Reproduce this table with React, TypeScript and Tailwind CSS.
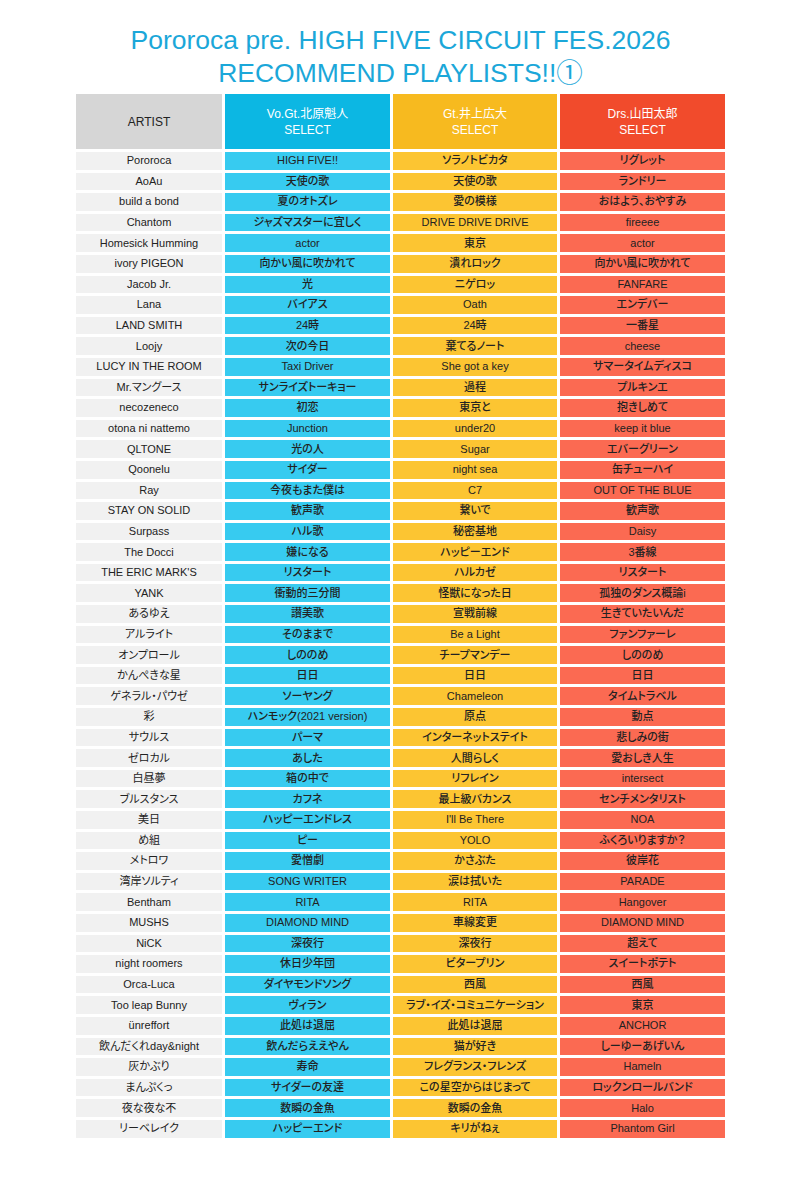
const rows: [string, string, string, string][] = [
  ['Pororoca', 'HIGH FIVE!!', 'ソラノトビカタ', 'リグレット'],
  ['AoAu', '天使の歌', '天使の歌', 'ランドリー'],
  ['build a bond', '夏のオトズレ', '愛の模様', 'おはよう、おやすみ'],
  ['Chantom', 'ジャズマスターに宜しく', 'DRIVE DRIVE DRIVE', 'fireeee'],
  ['Homesick Humming', 'actor', '東京', 'actor'],
  ['ivory PIGEON', '向かい風に吹かれて', '潰れロック', '向かい風に吹かれて'],
  ['Jacob Jr.', '光', 'ニゲロッ', 'FANFARE'],
  ['Lana', 'バイアス', 'Oath', 'エンデバー'],
  ['LAND SMITH', '24時', '24時', '一番星'],
  ['Loojy', '次の今日', '棄てるノート', 'cheese'],
  ['LUCY IN THE ROOM', 'Taxi Driver', 'She got a key', 'サマータイムディスコ'],
  ['Mr.マングース', 'サンライズトーキョー', '過程', 'プルキンエ'],
  ['necozeneco', '初恋', '東京と', '抱きしめて'],
  ['otona ni nattemo', 'Junction', 'under20', 'keep it blue'],
  ['QLTONE', '光の人', 'Sugar', 'エバーグリーン'],
  ['Qoonelu', 'サイダー', 'night sea', '缶チューハイ'],
  ['Ray', '今夜もまた僕は', 'C7', 'OUT OF THE BLUE'],
  ['STAY ON SOLID', '歓声歌', '繋いで', '歓声歌'],
  ['Surpass', 'ハル歌', '秘密基地', 'Daisy'],
  ['The Docci', '嫌になる', 'ハッピーエンド', '3番線'],
  ["THE ERIC MARK'S", 'リスタート', 'ハルカゼ', 'リスタート'],
  ['YANK', '衝動的三分間', '怪獣になった日', '孤独のダンス概論i'],
  ['あるゆえ', '讃美歌', '宣戦前線', '生きていたいんだ'],
  ['アルライト', 'そのままで', 'Be a Light', 'ファンファーレ'],
  ['オンプロール', 'しののめ', 'チープマンデー', 'しののめ'],
  ['かんぺきな星', '日日', '日日', '日日'],
  ['ゲネラル・パウゼ', 'ソーヤング', 'Chameleon', 'タイムトラベル'],
  ['彩', 'ハンモック(2021 version)', '原点', '動点'],
  ['サウルス', 'パーマ', 'インターネットステイト', '悲しみの街'],
  ['ゼロカル', 'あした', '人間らしく', '愛おしき人生'],
  ['白昼夢', '箱の中で', 'リフレイン', 'intersect'],
  ['ブルスタンス', 'カフネ', '最上級バカンス', 'センチメンタリスト'],
  ['美日', 'ハッピーエンドレス', "I'll Be There", 'NOA'],
  ['め組', 'ピー', 'YOLO', 'ふくろいりますか？'],
  ['メトロワ', '愛憎劇', 'かさぶた', '彼岸花'],
  ['湾岸ソルティ', 'SONG WRITER', '涙は拭いた', 'PARADE'],
  ['Bentham', 'RITA', 'RITA', 'Hangover'],
  ['MUSHS', 'DIAMOND MIND', '車線変更', 'DIAMOND MIND'],
  ['NiCK', '深夜行', '深夜行', '超えて'],
  ['night roomers', '休日少年団', 'ビタープリン', 'スイートポテト'],
  ['Orca-Luca', 'ダイヤモンドソング', '西風', '西風'],
  ['Too leap Bunny', 'ヴィラン', 'ラブ・イズ・コミュニケーション', '東京'],
  ['ünreffort', '此処は退屈', '此処は退屈', 'ANCHOR'],
  ['飲んだくれday&night', '飲んだらええやん', '猫が好き', 'しーゆーあげいん'],
  ['灰かぶり', '寿命', 'フレグランス・フレンズ', 'Hameln'],
  ['まんぷくっ', 'サイダーの友達', 'この星空からはじまって', 'ロックンロールバンド'],
  ['夜な夜な不', '数瞬の金魚', '数瞬の金魚', 'Halo'],
  ['リーベレイク', 'ハッピーエンド', 'キリがねぇ', 'Phantom Girl'],
];

// palt narrows kana the way the original's proportional Japanese font does
const cell =
  "h-[17.6px] flex items-center justify-center text-[11px] leading-none text-[#222] whitespace-nowrap [font-feature-settings:'palt']";
const head = 'h-[55px] flex flex-col items-center justify-center text-[12px] leading-[16px] text-white';

export default function App() {
  return (
    <div className="w-[801px] min-h-[1200px] bg-white pt-[24px] font-['Liberation_Sans','Noto_Sans_CJK_JP',sans-serif]">
      <h1 className="text-center text-[26.5px] leading-[33px] text-[#1ba7d9] font-normal">
        Pororoca pre. HIGH FIVE CIRCUIT FES.2026
        <br />
        RECOMMEND PLAYLISTS!!①
      </h1>

      <div className="w-[649px] mx-auto mt-[4px] grid grid-cols-[146px_165px_164px_165px] gap-x-[3px] gap-y-[3px]">
        <div className="h-[55px] flex items-center justify-center bg-[#d6d6d6] text-[12px] text-[#222]">ARTIST</div>
        <div className={`${head} bg-[#0cb7e3]`}>
          <span>Vo.Gt.北原魁人</span>
          <span>SELECT</span>
        </div>
        <div className={`${head} bg-[#f7ba1f]`}>
          <span>Gt.井上広大</span>
          <span>SELECT</span>
        </div>
        <div className={`${head} bg-[#f14b2c]`}>
          <span>Drs.山田太郎</span>
          <span>SELECT</span>
        </div>

        {rows.map(([artist, vo, gt, drs]) => (
          <div key={artist} className="contents">
            <div className={`${cell} bg-[#f1f1f1]`}>{artist}</div>
            <div className={`${cell} bg-[#37cbf0] font-medium`}>{vo}</div>
            <div className={`${cell} bg-[#fcc532] font-medium`}>{gt}</div>
            <div className={`${cell} bg-[#fb6a52] font-medium`}>{drs}</div>
          </div>
        ))}
      </div>
    </div>
  );
}
